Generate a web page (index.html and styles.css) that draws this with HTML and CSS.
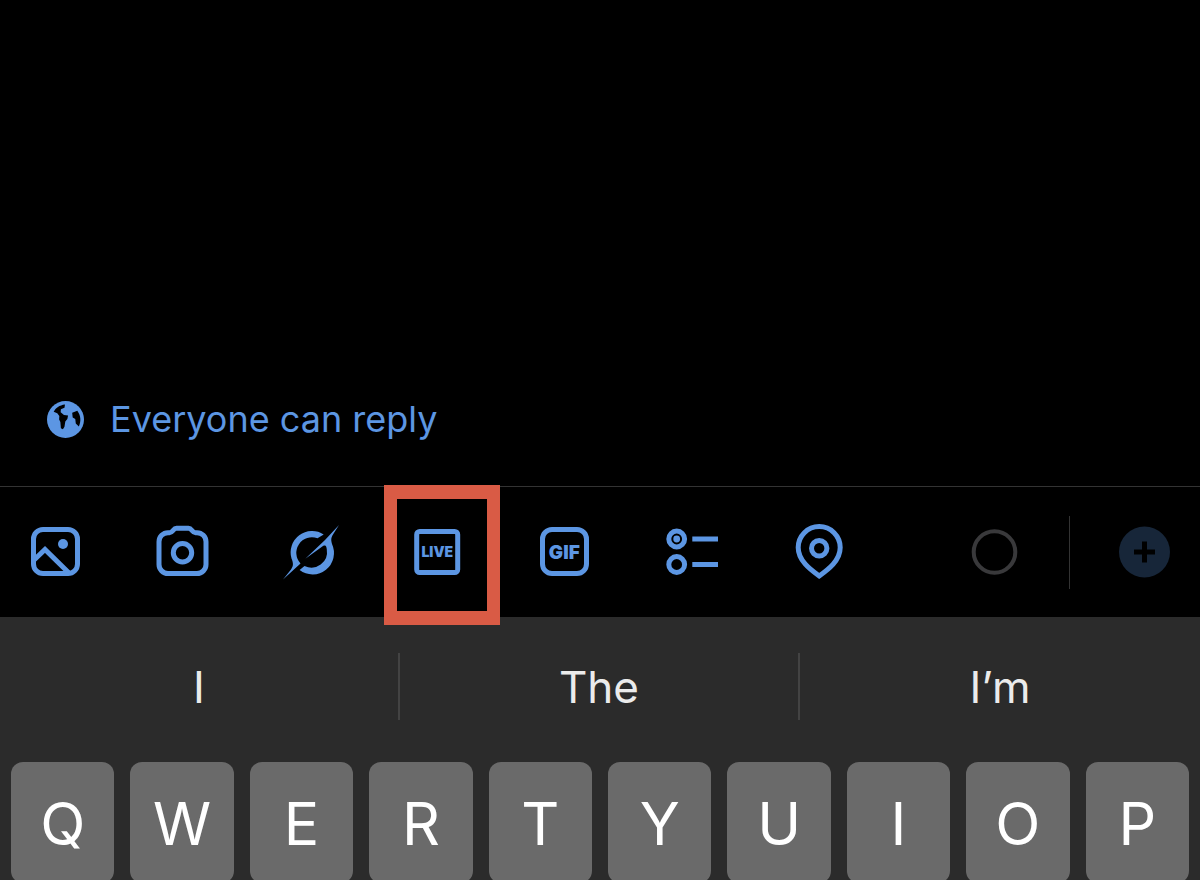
FILE: index.html
```
<!DOCTYPE html>
<html lang="en">
<head>
<meta charset="utf-8">
<meta name="viewport" content="width=device-width, initial-scale=1">
<title>Compose post</title>
<link rel="stylesheet" href="styles.css">
</head>
<body>
<main class="composer">
  <button class="audience" type="button">
    <svg class="globe" viewBox="0 0 36 36" aria-hidden="true">
      <circle class="fill" cx="18" cy="18" r="18"/>
      <path class="cut" d="M6.500 10.500C8.500 6.500 12 4 17.500 3.300L17 6.500 13.500 8 13.300 11 16.500 13.500 20.500 14 19.800 17.500 17.800 20 17 25 15.500 27.500 13.500 26.500 13 20.500 11.800 18 12 14.500 10 12z"/>
      <path class="cut" d="M24.500 11.500L29.500 9.500C33 14.500 33.300 19.500 31 24.800L28 22 27.500 17.500 25 16z"/>
    </svg>
    <span>Everyone can reply</span>
  </button>
</main>

<div class="toolbar" role="toolbar" aria-label="Post tools">
  <div class="tools">
    <button class="tool" type="button" aria-label="Photo">
      <svg viewBox="0 0 60 60">
        <rect class="line" x="8.500" y="7.500" width="44" height="44" rx="9.500"/>
        <path class="line" d="M8 39L20 27.500 45 52"/>
        <circle class="fill" cx="38" cy="22" r="5"/>
      </svg>
    </button>
    <button class="tool" type="button" aria-label="Camera">
      <svg viewBox="0 0 60 60">
        <path class="line" d="M16 10.700H17.500C21 10.700 21 6.300 24.500 6.300H36.500C40 6.300 40 10.700 43.500 10.700H45A9 9 0 0 1 54 19.700V42.500A9 9 0 0 1 45 51.500H16A9 9 0 0 1 7 42.500V19.700A9 9 0 0 1 16 10.700z"/>
        <circle class="line" cx="30.500" cy="30.700" r="9.200"/>
      </svg>
    </button>
    <button class="tool" type="button" aria-label="Grok">
      <svg viewBox="0 0 60 60">
        <path class="fill" d="M43.700 12.500A21.400 21.400 0 0 0 11.500 36.500C13.300 41 13.800 43.500 11 47.500L3 57.500 20.500 41.500A15.600 15.600 0 0 1 37.500 16.300z"/>
        <path class="fill" d="M25.300 36.700L45 18 59 3 53 12.500C50.800 16 51 18 52 22A21.400 21.400 0 0 1 19.600 48L24.500 44A15.600 15.600 0 0 0 46.800 27.500C46.500 24.500 46 22.500 43 24z"/>
      </svg>
    </button>
    <button class="tool tool-live" type="button" aria-label="Live">
      <svg viewBox="0 0 60 60">
        <rect class="line" x="9.700" y="9.500" width="41" height="41" rx="3"/>
        <text class="label label-live" x="30.300" y="35">LIVE</text>
      </svg>
      <span class="highlight"></span>
    </button>
    <button class="tool" type="button" aria-label="GIF">
      <svg viewBox="0 0 60 60">
        <rect class="line" x="8.500" y="7.500" width="44" height="44" rx="9.500"/>
        <text class="label label-gif" x="30.300" y="37">GIF</text>
      </svg>
    </button>
    <button class="tool" type="button" aria-label="Poll">
      <svg viewBox="0 0 60 60">
        <circle class="line" cx="14.700" cy="17" r="7.900"/>
        <circle class="fill" cx="14.700" cy="17" r="3.400"/>
        <circle class="line" cx="14.700" cy="42.500" r="7.900"/>
        <path class="line" d="M30.300 17H56M30.300 42.500H56"/>
      </svg>
    </button>
    <button class="tool" type="button" aria-label="Location">
      <svg viewBox="0 0 60 60">
        <path class="line" d="M30.200 54C22 48 9.200 39 9.200 25.500A21 21 0 0 1 51.200 25.500C51.200 39 38.500 48 30.200 54z"/>
        <circle class="line" cx="30.200" cy="26.300" r="7.700"/>
      </svg>
    </button>
  </div>
  <div class="status">
    <svg class="counter" viewBox="0 0 60 60" role="img" aria-label="Characters used">
      <circle class="ring" cx="29.500" cy="30" r="20.800"/>
    </svg>
    <span class="rule"></span>
    <button class="tool" type="button" aria-label="Add post" disabled>
      <svg viewBox="0 0 60 60">
        <circle class="disc" cx="30.500" cy="30" r="25.500"/>
        <path class="plus" d="M20 30H41M30.500 19.500V40.500"/>
      </svg>
    </button>
  </div>
</div>

<section class="keyboard" aria-label="Keyboard">
  <div class="suggestions">
    <button class="suggestion" type="button">I</button>
    <button class="suggestion" type="button">The</button>
    <button class="suggestion" type="button">I’m</button>
  </div>
  <div class="keys">
    <button class="key" type="button">Q</button>
    <button class="key" type="button">W</button>
    <button class="key" type="button">E</button>
    <button class="key" type="button">R</button>
    <button class="key" type="button">T</button>
    <button class="key" type="button">Y</button>
    <button class="key" type="button">U</button>
    <button class="key" type="button">I</button>
    <button class="key" type="button">O</button>
    <button class="key" type="button">P</button>
  </div>
</section>
</body>
</html>
```

FILE: styles.css
```
:root {
  --accent: #5c96e3;
  --panel: #2b2b2b;
  --font: Inter, "Liberation Sans", sans-serif;
}

* {
  box-sizing: border-box;
}

body {
  display: flex;
  flex-direction: column;
  height: 100vh;
  margin: 0;
  overflow: hidden;
  background: #000;
  font-family: var(--font);
}

button {
  margin: 0;
  padding: 0;
  border: 0;
  background: none;
  color: inherit;
  font: inherit;
}

svg {
  display: block;
}

.composer {
  display: flex;
  flex: 1;
  flex-direction: column;
  align-items: flex-start;
  justify-content: flex-end;
  padding: 0 47px 43px;
}

.audience {
  display: flex;
  align-items: center;
  gap: 26px;
  color: var(--accent);
  font-size: 36px;
  line-height: 48px;
}

.globe {
  width: 37px;
  height: 37px;
}

.toolbar {
  display: flex;
  align-items: center;
  flex-shrink: 0;
  height: 131px;
  padding: 0 26px 0 25px;
  border-top: 1px solid #333;
}

.tools {
  display: flex;
  flex: 1;
  justify-content: space-between;
}

.tool,
.counter {
  width: 60px;
  height: 60px;
}

.tool-live {
  position: relative;
}

.highlight {
  position: absolute;
  inset: -37px -33px -43px -23px;
  border: solid #d95b45;
  border-width: 14px 13px;
}

.status {
  display: flex;
  align-items: center;
  gap: 44px;
  margin-left: 116px;
}

.rule {
  width: 1px;
  height: 73px;
  background: #333;
}

.fill {
  fill: var(--accent);
}

.cut {
  fill: #000;
}

.line {
  fill: none;
  stroke: var(--accent);
  stroke-width: 5px;
}

.label {
  fill: var(--accent);
  font-family: var(--font);
  font-weight: 900;
  text-anchor: middle;
}

.label-live {
  font-size: 14px;
}

.label-gif {
  font-size: 19px;
}

.ring {
  fill: none;
  stroke: #39393b;
  stroke-width: 4px;
}

.disc {
  fill: #172639;
}

.plus {
  stroke: #000;
  stroke-width: 5px;
}

.keyboard {
  flex-shrink: 0;
  height: 263px;
  background: var(--panel);
}

.suggestions {
  display: grid;
  grid-template-columns: repeat(3, 1fr);
  padding: 36px 0 42px;
}

.suggestion {
  height: 67px;
  padding-top: 2px;
  color: #ebebeb;
  font-size: 44px;
  line-height: 65px;
}

.suggestion:not(:last-child) {
  border-right: 2px solid #434343;
}

.keys {
  display: grid;
  grid-template-columns: repeat(10, 1fr);
  gap: 16px;
  padding: 0 11px;
}

.key {
  height: 121px;
  padding-top: 2px;
  border-radius: 12px;
  background: #6a6a6a;
  color: #fff;
  font-size: 59px;
  line-height: 119px;
}
```
